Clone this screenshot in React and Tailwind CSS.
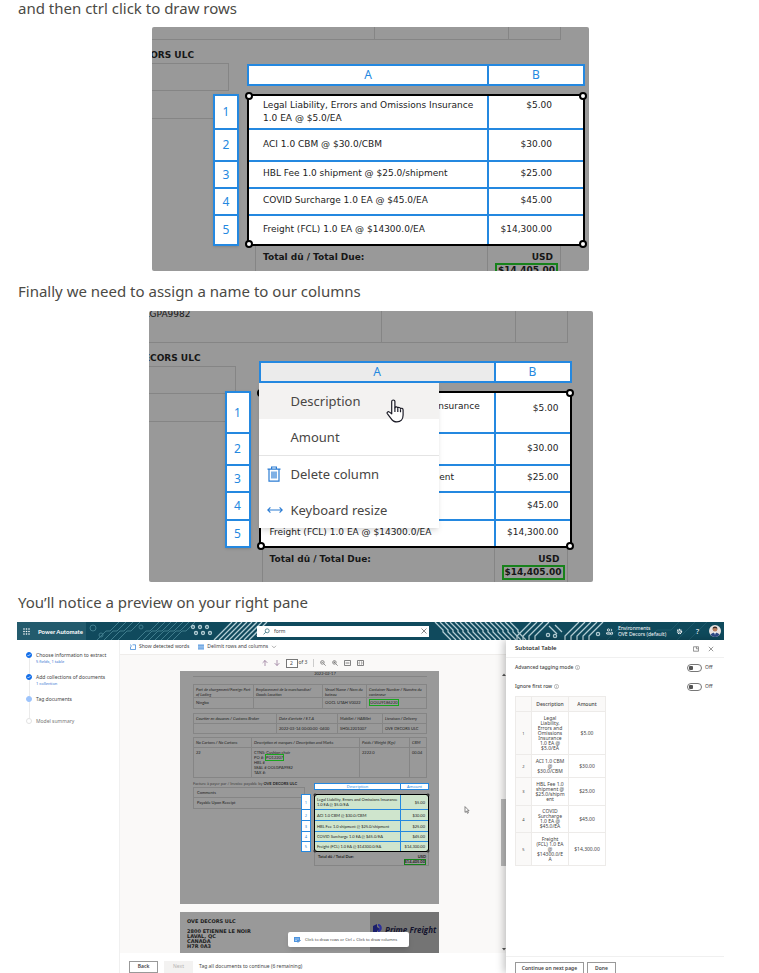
import React from "react";

const ui = "font-['Noto_Sans','Open_Sans',sans-serif]";
const doc = "font-['DejaVu_Sans',sans-serif]";
const fine = "font-['Lato','Open_Sans',sans-serif]";

const lineItems = [
  ["Legal Liability, Errors and Omissions Insurance 1.0 EA @ $5.0/EA", "$5.00"],
  ["ACI 1.0 CBM @ $30.0/CBM", "$30.00"],
  ["HBL Fee 1.0 shipment @ $25.0/shipment", "$25.00"],
  ["COVID Surcharge 1.0 EA @ $45.0/EA", "$45.00"],
  ["Freight (FCL) 1.0 EA @ $14300.0/EA", "$14,300.00"],
];

function Caption({ children, className = "leading-10" }) {
  return (
    <p className={`pl-px font-['Noto_Sans','Open_Sans',sans-serif] text-[15px] text-[#4b4a45] ${className}`}>
      {children}
    </p>
  );
}

function Handles({ size = "size-2 border-2" }) {
  const base = `absolute rounded-full border-black bg-white ${size}`;
  return (
    <>
      <span className={`${base} left-0 top-0 -translate-x-1/2 -translate-y-1/2`} />
      <span className={`${base} right-0 top-0 translate-x-1/2 -translate-y-1/2`} />
      <span className={`${base} bottom-0 left-0 -translate-x-1/2 translate-y-1/2`} />
      <span className={`${base} bottom-0 right-0 translate-x-1/2 translate-y-1/2`} />
    </>
  );
}

function Selection({ heights, colA, colB, padLeft, padRight, firstPad, active, children }) {
  return (
    <div className="grid w-fit grid-cols-[26px_auto] gap-2">
      <div />
      <div className={`relative flex h-[22px] border-2 border-[#2488e0] bg-white text-center text-[12px] leading-[18px] text-[#2488e0] ${ui}`}>
        <div className={`border-r-2 border-[#2488e0] ${colA} ${active ? "bg-[#ebebeb]" : ""}`}>A</div>
        <div className={colB}>B</div>
        {children}
      </div>
      <div className={`border-x-2 border-t-2 border-[#2488e0] bg-white text-[12px] text-[#2488e0] shadow-sm ${ui}`}>
        {heights.map((h, i) => (
          <div key={h + i} className={`flex items-center justify-center border-b-2 border-[#2488e0] ${h} ${i === 4 ? "box-content" : ""}`}>
            {i + 1}
          </div>
        ))}
      </div>
      <div className={`relative border-2 border-black bg-white ${doc}`}>
        <table className="table-fixed border-separate border-spacing-0 text-[9px] leading-[13px] text-[#222]">
          <tbody>
            {lineItems.map(([name, amount], i) => {
              const line = i < 4 ? "border-b-2" : "";
              const lift = i > 0 ? "pb-0.5" : "";
              return (
                <tr key={name} className={heights[i]}>
                  <td className={`border-r-2 border-[#2488e0] px-0 pt-0 ${line} ${lift} ${colA} ${padLeft}`}>{name}</td>
                  <td className={`border-[#2488e0] px-0 pt-0 text-right ${line} ${colB} ${padRight} ${i === 0 ? firstPad : lift}`}>{amount}</td>
                </tr>
              );
            })}
          </tbody>
        </table>
        <Handles />
      </div>
    </div>
  );
}

function Totals({ className, padLeft }) {
  return (
    <div className={`flex justify-between border-x border-[#858585] text-[9px] font-bold leading-3 text-[#161616] ${doc} ${className}`}>
      <span className={`pt-[5px] ${padLeft}`}>Total dû / Total Due:</span>
      <span className="flex flex-col items-end border-l border-[#858585] pl-[7px] pt-[5px]">
        <span className="pr-[7px]">USD</span>
        <span className="mr-0.5 border-2 border-[#17821b] px-px leading-[11px]">$14,405.00</span>
      </span>
    </div>
  );
}

function RowsFigure() {
  return (
    <figure className="relative mx-auto h-[244px] w-[437px] max-w-full overflow-hidden rounded-xs bg-[#999]">
      <div className={`absolute inset-0 text-[9px] font-bold text-[#161616] ${doc}`}>
        <div className="flex h-[13px] w-[409px] justify-end border-b border-r border-[#858585]">
          <div className="w-[134px] border-l border-[#858585]" />
          <div className="w-[52px] border-l border-[#858585]" />
        </div>
        <div className="flex h-[23px] w-[42px] items-center justify-end whitespace-nowrap pt-2">DECORS ULC</div>
        <div className="h-[28px] w-[77px] border-y border-r border-[#858585]" />
        <div className="h-[28px] w-[77px] border-b border-[#858585]" />
      </div>
      <div className="relative pl-[61px] pt-[37px]">
        <Selection
          heights={["h-[34px]", "h-[32px]", "h-[27px]", "h-[27px]", "h-[28px]"]}
          colA="w-[240px]"
          colB="w-[94px]"
          padLeft="pl-[14px]"
          padRight="pr-[31px]"
          firstPad="pb-[14px]"
        />
        <Totals className="ml-[42px] h-10 w-[306px]" padLeft="pl-[7px]" />
      </div>
    </figure>
  );
}

function TrashIcon() {
  return (
    <svg viewBox="0 0 14 16" className="h-4 w-3.5" fill="none" stroke="#2b7cd3" strokeWidth="1.2">
      <path d="M.5 3.200h13M4.600 3V1h4.800v2M2 3.200v12h10v-12" />
      <path d="M5 5.600v7M7 5.600v7M9 5.600v7" />
    </svg>
  );
}

function ResizeIcon() {
  return (
    <svg viewBox="0 0 16 8" className="h-2 w-4" fill="none" stroke="#2b7cd3" strokeWidth="1.1">
      <path d="M.8 4h14.400M3.400 1.400L.8 4l2.600 2.600M12.600 1.400L15.200 4l-2.600 2.600" />
    </svg>
  );
}

function HandCursor() {
  return (
    <svg viewBox="0 0 18 24" className="absolute left-[127px] top-4 h-6 w-[18px]" fill="#fff" stroke="#1b1b26" strokeWidth="1.2" strokeLinejoin="round">
      <path d="M5.700 14.800V2.600a1.600 1.600 0 0 1 3.200 0v6.200c.3-1.300 2.700-1.200 2.900.3.500-1 2.500-.8 2.700.6.600-.8 2.600-.5 2.600 1.200v5.200c0 4-2.400 6.800-6.200 6.800-3 0-4.500-1.300-6-3.600L1.300 14.600c-.8-1.400 1-2.600 2.200-1.500z" />
      <path d="M8.900 8.500v4.500M11.800 9.500V13M14.500 10.200v3" fill="none" />
    </svg>
  );
}

function ColumnMenu() {
  const item = "flex h-9 w-full items-center text-left";
  return (
    <div role="menu" className="absolute -left-0.5 top-5 z-10 w-[180px] bg-white text-[13px] text-[#484644] shadow-md">
      <button type="button" role="menuitem" className={`${item} bg-[#f3f2f1] pl-8`}>Description</button>
      <button type="button" role="menuitem" className={`${item} pl-8`}>Amount</button>
      <hr className="border-[#e4e4e4]" />
      <button type="button" role="menuitem" className={`${item} gap-2.5 pl-2`}><TrashIcon />Delete column</button>
      <button type="button" role="menuitem" className={`${item} gap-2 pl-2`}><ResizeIcon />Keyboard resize</button>
      <HandCursor />
    </div>
  );
}

function ColumnsFigure() {
  return (
    <figure className="relative mx-auto h-[271px] w-[444px] max-w-full overflow-hidden rounded-xs bg-[#999]">
      <div className={`absolute inset-0 text-[9px] text-[#161616] ${doc}`}>
        <div className="flex h-8 w-[419px] border-b border-r border-[#858585]">
          <div className="flex w-[42px] justify-end leading-[6px]">DLGPA9982</div>
          <div className="ml-auto w-[134px] border-l border-[#858585]" />
          <div className="w-[52px] border-l border-[#858585]" />
        </div>
        <div className="flex h-[23px] w-[52px] items-center justify-end whitespace-nowrap pt-2 font-bold">DECORS ULC</div>
        <div className="h-[28px] w-[87px] border-y border-r border-[#858585]" />
        <div className="h-[28px] w-[87px] border-b border-[#858585]" />
      </div>
      <div className="relative pl-[76px] pt-[50px]">
        <Selection
          heights={["h-[41px]", "h-[32px]", "h-[27px]", "h-[28px]", "h-[25px]"]}
          colA="w-[235px]"
          colB="w-[74px]"
          padLeft="pl-[9px]"
          padRight="pr-[11px]"
          firstPad="pb-2"
          active
        >
          <ColumnMenu />
        </Selection>
        <Totals className="ml-[37px] h-10 w-[306px]" padLeft="pl-[7px]" />
      </div>
    </figure>
  );
}

const dimTraces = [96, 103, 110, 117, 136, 142, 148, 154, 160, 166, 172];
const forwardTraces = [206, 211, 216, 221, 226, 231, 236, 241];
const backTraces = [418, 423, 428, 433, 438, 443, 448, 453, 458, 463, 468, 473, 478, 483, 488, 493];
const brightTraces = [500, 506, 512, 518, 548, 554, 560, 566, 572];

function Circuit() {
  return (
    <svg className="absolute inset-0 size-full" viewBox="0 0 707 18" preserveAspectRatio="xMinYMid slice" fill="none" aria-hidden="true">
      <g stroke="#3f7c8c" strokeWidth="1">
        {dimTraces.map((x) => (
          <path key={x} d={`M${x - 16} 18L${x - 7} 9L${x - 3} 9L${x + 6} 0`} />
        ))}
        <path d="M590 18l18-18M600 18l18-18M630 18l10-10h14l8-8M660 18l18-18M672 18l18-18" />
        <circle cx="76" cy="6" r="3" /><circle cx="84" cy="13" r="2" /><circle cx="124" cy="5" r="2" />
      </g>
      <g stroke="#b4ced5" strokeWidth="1.300">
        {forwardTraces.map((x) => (
          <path key={x} d={`M${x - 9} 18L${x + 9} 0`} />
        ))}
        {backTraces.map((x) => (
          <path key={x} d={`M${x} 0l8 8v2l8 8`} />
        ))}
        {brightTraces.map((x) => (
          <path key={x} d={`M${x} 18v-4l14-14`} />
        ))}
        {[176, 183, 190].map((x) => (
          <g key={x}><circle cx={x} cy="5" r="1.500" /><circle cx={x + 3} cy="11" r="1.500" /></g>
        ))}
        <path d="M532 4l8 8M538 3l7 7M240 14l4-8" />
        <circle cx="531" cy="13" r="1.600" /><circle cx="538" cy="14" r="1.600" /><circle cx="581" cy="12" r="1.600" />
      </g>
    </svg>
  );
}

function AppHeader() {
  return (
    <header className="relative flex h-[18px] items-center bg-[#104a5d] text-white">
      <Circuit />
      <div className="relative flex h-full w-[69px] items-center gap-2 bg-[#235b6d] pl-1.5">
        <svg viewBox="0 0 7 7" className="size-[7px] shrink-0" fill="#fff">
          {[1, 3.5, 6].map((x) => [1, 3.5, 6].map((y) => <circle key={`${x}-${y}`} cx={x} cy={y} r=".8" />))}
        </svg>
        <span className={`whitespace-nowrap text-[6px] font-bold ${fine}`}>Power Automate</span>
      </div>
      <label className="relative ml-[171px] flex h-[11px] w-[172px] items-center gap-1 bg-white px-1.5 text-[#444]">
        <svg viewBox="0 0 7 7" className="size-[7px]" fill="none" stroke="#35707e" strokeWidth=".8"><circle cx="4.200" cy="2.800" r="2" /><path d="M2.700 4.200L.6 6.400" /></svg>
        <input aria-label="Search" defaultValue="form" className="min-w-0 flex-1 bg-transparent text-[5px] leading-[8px] outline-none" />
        <svg viewBox="0 0 6 6" className="-mr-1 size-1.5" stroke="#555" strokeWidth=".7"><path d="M.5.500l5 5M5.500.500l-5 5" /></svg>
      </label>
      <div className="relative ml-auto flex h-full items-center bg-[#104a5d]/70 pr-[3px]">
        <svg viewBox="0 0 8 8" className="mr-[5px] size-[7px]" fill="none" stroke="#fff" strokeWidth=".9"><circle cx="2.800" cy="2.300" r="1.300" /><path d="M.5 7V5.500h4.600V7M5.500 1.200c1.500 0 1.500 2.200 0 2.200M6 5h1.500v2H1" /></svg>
        <div className="w-[58px] whitespace-nowrap text-[5px] leading-[6px]">Environments<br />OVE Decors (default)</div>
        <svg viewBox="0 0 8 8" className="size-[7px]" fill="none" stroke="#fff"><circle cx="4" cy="4" r="2.300" strokeWidth="1.500" strokeDasharray="1.200 .6" /><circle cx="4" cy="4" r="1" strokeWidth=".7" /></svg>
        <span className="ml-[13px] text-[7px] leading-none">?</span>
        <svg viewBox="0 0 12 12" className="ml-[10px] size-3"><circle cx="6" cy="6" r="6" fill="#e9e4e2" /><circle cx="6" cy="4.200" r="2.400" fill="#b97f60" /><path d="M3.600 3.800C3.500.7 8.500.7 8.400 3.800 7 2.600 5 2.600 3.600 3.800z" fill="#3c2a24" /><path d="M1.600 10.100C2.200 6.500 9.800 6.500 10.400 10.100 8 12.600 4 12.600 1.600 10.100z" fill="#2d4a86" /><path d="M5 7h2l-1 3z" fill="#fff" /></svg>
      </div>
    </header>
  );
}

const steps = [
  { label: "Choose information to extract", note: "5 fields, 1 table", state: "done" },
  { label: "Add collections of documents", note: "1 collection", state: "done" },
  { label: "Tag documents", state: "current" },
  { label: "Model summary", state: "todo" },
];
const dots = {
  done: "bg-[#1570ea] border-[#1570ea]",
  current: "bg-[#9cc3fb] border-[#9cc3fb]",
  todo: "bg-white border-[#e2e2e2]",
};

function Stepper() {
  return (
    <ol className="w-[103px] shrink-0 border-r border-[#f0f0f0] bg-white pl-[9px] pt-3 text-[5px] leading-[6px]">
      {steps.map((s, i) => (
        <li key={s.label} className="flex h-[22px] gap-1">
          <div className="flex flex-col items-center">
            <span className={`flex size-1.5 items-center justify-center rounded-full border ${dots[s.state]}`}>
              {s.state === "done" && <svg viewBox="0 0 4 4" className="size-1" fill="none" stroke="#fff" strokeWidth=".7"><path d="M.5 2l1 1 2-2" /></svg>}
            </span>
            {i < 3 && <span className="w-px flex-1 bg-[#ebebeb]" />}
          </div>
          <div className={`whitespace-nowrap ${s.state === "todo" ? "text-[#777]" : "text-[#444]"}`}>
            {s.label}
            {s.note && <div className="mt-px text-[4px] text-[#2f6fd0]">{s.note}</div>}
          </div>
        </li>
      ))}
    </ol>
  );
}

function Magnifier({ plus }) {
  return (
    <svg viewBox="0 0 6 6" className="size-1.5" fill="none" stroke="#666" strokeWidth=".7">
      <circle cx="2.400" cy="2.400" r="1.800" />
      <path d={plus ? "M3.700 3.700l2 2M1.500 2.400h1.800M2.400 1.500v1.800" : "M3.700 3.700l2 2M1.500 2.400h1.800"} />
    </svg>
  );
}

function Toolbar() {
  return (
    <>
      <div className="flex h-[15px] items-center border-b border-[#efedeb] bg-white pl-[10px] text-[5px] text-[#444]">
        <button type="button" className="flex items-center gap-[3px] whitespace-nowrap">
          <svg viewBox="0 0 6 6" className="size-1.5" fill="none" stroke="#2b7cd3" strokeWidth=".7"><path d="M2.500.800h3v4.700h-5v-3M.5.500l1 2" /></svg>
          Show detected words
        </button>
        <button type="button" className="ml-[9px] flex items-center gap-[3px] whitespace-nowrap">
          <svg viewBox="0 0 6 6" className="size-1.5"><path fill="#5b9be0" d="M0 .5h6v5H0z" /><path stroke="#fff" strokeWidth=".5" d="M0 2.200h6M0 3.900h6" /></svg>
          Delimit rows and columns
          <svg viewBox="0 0 6 4" className="h-1 w-1.5" fill="none" stroke="#777" strokeWidth=".6"><path d="M1 .8l2 2 2-2" /></svg>
        </button>
      </div>
      <div className="flex h-4 items-center justify-center gap-[6px] text-[5px] text-[#444]">
        <svg viewBox="0 0 6 6" className="size-1.5" fill="none" stroke="#8a6a8f" strokeWidth=".7"><path d="M3 6V.5M.6 2.900L3 .5l2.400 2.400" /></svg>
        <svg viewBox="0 0 6 6" className="size-1.5" fill="none" stroke="#8a6a8f" strokeWidth=".7"><path d="M3 0v5.500M.6 3.100L3 5.500l2.400-2.400" /></svg>
        <label className="flex items-center gap-px whitespace-nowrap">
          <input aria-label="Page" defaultValue="2" className="h-[9px] w-3 border border-[#777] bg-white text-center text-[5px]" /> of 3
        </label>
        <span className="h-2 w-px bg-[#ccc]" />
        <Magnifier plus={false} />
        <Magnifier plus />
        <svg viewBox="0 0 7 6" className="h-1.5 w-[7px]" fill="none" stroke="#666" strokeWidth=".8"><path d="M.5.500h6v5h-6zM1.600 3h3.800" /></svg>
        <svg viewBox="0 0 7 6" className="h-1.5 w-[7px]" fill="none" stroke="#666" strokeWidth=".8"><path d="M.5.500h6v5h-6zM2 2.500V2h.8M5 2.500V2h-.8M2 3.500V4h.8M5 3.500V4h-.8" /></svg>
      </div>
    </>
  );
}

const edge = "border-[#858585]";

function DocTable({ cols, head, body, headHeight, bodyHeight, className = "" }) {
  return (
    <div className={`border-l border-t ${edge} ${className}`}>
      <div className={`grid italic ${cols} ${headHeight}`}>
        {head.map((t) => <div key={t} className={`overflow-hidden border-b border-r pl-0.5 pt-0.5 ${edge}`}>{t}</div>)}
      </div>
      <div className={`grid ${cols} ${bodyHeight}`}>
        {body.map((t, i) => <div key={i} className={`whitespace-nowrap border-b border-r pl-0.5 pt-0.5 ${edge}`}>{t}</div>)}
      </div>
    </div>
  );
}

const miniHeights = ["h-[15px]", "h-[11px]", "h-[11px]", "h-[10px]", "h-[9px]"];

function MiniSelection() {
  return (
    <div className="absolute right-[10px] top-[112px] grid grid-cols-[10px_115px] gap-x-[3px] gap-y-1 text-[4px] leading-[5px]">
      <div />
      <div className={`flex h-[7px] border border-[#2488e0] bg-white text-center text-[#2488e0] ${ui}`}>
        <div className="w-[86px] border-r border-[#2488e0]">Description</div>
        <div className="flex-1">Amount</div>
      </div>
      <div className={`border-x border-t border-[#2488e0] bg-white text-[#2488e0] ${ui}`}>
        {miniHeights.map((h, i) => (
          <div key={i} className={`flex items-center justify-center border-b border-[#2488e0] ${h} ${i === 4 ? "box-content" : ""}`}>{i + 1}</div>
        ))}
      </div>
      <div className="relative border border-black bg-[#cfe5cd] text-[#222]">
        <table className="w-full table-fixed border-separate border-spacing-0">
          <tbody>
            {lineItems.map(([name, amount], i) => (
              <tr key={name} className={miniHeights[i]}>
                <td className={`w-[86px] border-r border-[#2488e0] p-0 pl-0.5 ${i < 4 ? "border-b" : ""}`}>{name}</td>
                <td className={`border-[#2488e0] p-0 pr-[3px] text-right ${i < 4 ? "border-b" : ""}`}>{amount}</td>
              </tr>
            ))}
          </tbody>
        </table>
        <Handles size="size-[3px] border" />
      </div>
      <div />
      <div className={`-mt-1 flex h-[14px] justify-between border-x border-b pl-[3px] pr-0.5 pt-0.5 font-bold text-[#222] ${edge}`}>
        <span>Total dû / Total Due:</span>
        <span className="flex flex-col items-end">USD<span className="border border-[#17821b] leading-1">$14,405.00</span></span>
      </div>
    </div>
  );
}

function Pages() {
  return (
    <div className={`relative flex min-h-0 flex-1 flex-col items-center gap-2 overflow-hidden pr-[7px] text-[4px] leading-[5px] text-[#222] ${fine}`}>
      <section className="relative h-[233px] w-[259px] shrink-0 bg-[#999] pl-[13px] pr-[12px]">
        <p className={`mb-[7px] border-b pl-[30px] text-center ${edge}`}>2022-02-17</p>
        <DocTable
          cols="grid-cols-[60px_69px_44px_1fr]" headHeight="h-[13px]" bodyHeight="h-[11px]"
          head={["Port de chargement/Foreign Port of Lading", "Emplacement de la marchandise/ Goods Location", "Vessel Name / Nom du bateau", "Container Number / Numéro du conteneur"]}
          body={["Ningbo", "", "OOCL UTAH V0022", <span className="border border-[#18a51d]">OOLU9186220</span>]}
        />
        <DocTable
          className="mt-1" cols="grid-cols-[83px_61px_45px_1fr]" headHeight="h-[10px]" bodyHeight="h-[10px]"
          head={["Courtier en douanes / Customs Broker", "Date d'arrivée / E.T.A", "Mabillet / HABillet", "Livraison / Delivery"]}
          body={["", "2022-03-14 00:00:00 -0400", "SHGL2201007", "OVE DECORS ULC"]}
        />
        <DocTable
          className="mt-[3px]" cols="grid-cols-[58px_108px_50px_1fr]" headHeight="h-[10px]" bodyHeight="h-[30px]"
          head={["No Cartons / No Cartons", "Description et marques / Description and Marks", "Poids / Weight (Kgs)", "CBM"]}
          body={["22", <span>CTNS: Cushion chair<br />PO #: <span className="border border-[#18a51d]">PO12207</span><br />HBL #<br />SEAL # OOLGPA9982<br />TAX #:</span>, "2222.0", "00.04"]}
        />
        <p className="mb-px mt-[3px] whitespace-nowrap text-[#444]">Facture à payer par / Invoice payable by <b className="text-[#222]">OVE DECORS ULC</b></p>
        <div className={`w-28 border ${edge}`}>
          <div className={`h-[10px] border-b pl-[3px] pt-0.5 ${edge}`}>Comments</div>
          <div className="h-[10px] pl-[3px] pt-0.5">Payable Upon Receipt</div>
        </div>
        <MiniSelection />
      </section>
      <section className="flex min-h-0 w-[259px] flex-1 justify-between overflow-hidden bg-[#999]">
        <address className={`whitespace-nowrap pl-[7px] pt-[7px] text-[5px] font-bold not-italic leading-[5px] text-[#1d1d1d] ${doc}`}>
          OVE DECORS ULC<br /><br />2800 ETIENNE LE NOIR<br />LAVAL, QC<br />CANADA<br />H7R 0A3
        </address>
        <div className="flex h-full w-[69px] items-start gap-0.5 bg-[#747474] pl-[3px] pt-3 font-['Open_Sans',sans-serif]">
          <svg viewBox="0 0 10 10" className="size-2.5 shrink-0"><path d="M0 2l4-2v3l3 2-3 2v3H0z" fill="#1b1f6b" /><path d="M5 0c5 0 5 8 0 8V6c2 0 2-4 0-4z" fill="#2c2f9c" /></svg>
          <span className="whitespace-nowrap text-[8px] font-bold italic leading-[11px] text-[#15152e]">Prime Freight</span>
        </div>
      </section>
      <div role="status" className={`absolute bottom-1.5 left-[168px] flex h-[15px] w-[121px] items-center gap-1 rounded-xs bg-white pl-1.5 text-[#444] shadow-md ${ui}`}>
        <svg viewBox="0 0 7 6" className="h-1.5 w-[7px] shrink-0"><path fill="#4d94df" d="M0 0h6v3L4 5H0z" /><path d="M1 2h4M1 3.500h2" stroke="#fff" strokeWidth=".5" /><path d="M4 5.500L6.500 3" stroke="#1e66b5" /></svg>
        <span className="whitespace-nowrap text-[4px]">Click to draw rows or Ctrl + Click to draw columns</span>
      </div>
      <div className="absolute inset-y-0 right-0 flex w-[5px] flex-col items-center justify-between py-0.5 text-[#555]">
        <svg viewBox="0 0 4 3" className="h-[3px] w-1"><path d="M0 3l2-2.500L4 3z" fill="currentColor" /></svg>
        <span className="mt-10 h-[67px] w-[5px] bg-[#b9b9b9]" />
        <svg viewBox="0 0 4 3" className="h-[3px] w-1"><path d="M0 0l2 2.500L4 0z" fill="currentColor" /></svg>
      </div>
      <svg viewBox="0 0 6 8" className="absolute right-9 top-[135px] h-2 w-1.5" fill="#fff" stroke="#555" strokeWidth=".7"><path d="M1 .6v5.800l1.400-1.200 1 2.100 1-.5-1-2h1.700z" /></svg>
    </div>
  );
}

const previewRows = [
  ["h-[43px]", "Legal\nLiability,\nErrors and\nOmissions\nInsurance\n1.0 EA @\n$5.0/EA"],
  ["h-[23px]", "ACI 1.0 CBM\n@\n$30.0/CBM"],
  ["h-[28px]", "HBL Fee 1.0\nshipment @\n$25.0/shipm\nent"],
  ["h-[27px]", "COVID\nSurcharge\n1.0 EA @\n$45.0/EA"],
  ["h-[33px]", "Freight\n(FCL) 1.0 EA\n@\n$14300.0/E\nA"],
];

function Toggle({ id, label }) {
  return (
    <div className="flex h-[19px] items-center">
      <label htmlFor={id} className="font-medium">{label}</label>
      <svg viewBox="0 0 5 5" className="ml-0.5 size-[5px]" fill="none" stroke="#777" strokeWidth=".5"><circle cx="2.500" cy="2.500" r="2.100" /><path d="M2.500 2.200v1.500M2.500 1.300v.4" /></svg>
      <input id={id} type="checkbox" role="switch" className="ml-auto h-2 w-[15px] appearance-none rounded-full border border-[#777] bg-[radial-gradient(circle_at_3px_50%,#555_2px,transparent_2.5px)]" />
      <span className="w-[22px] pl-[3px]">Off</span>
    </div>
  );
}

function PreviewPanel() {
  return (
    <aside className="z-10 flex w-[218px] shrink-0 flex-col bg-white text-[5px] leading-[5px] text-[#444] shadow-[-2px_0_8px_rgba(0,0,0,0.25)]">
      <div className="flex h-[18px] shrink-0 items-center gap-[9px] border-b border-[#f0f0f0] pl-[9px] pr-[10px]">
        <h2 className="mr-auto text-[6px] font-semibold text-[#333]">Subtotal Table</h2>
        <svg viewBox="0 0 6 6" className="size-1.5" fill="none" stroke="#666" strokeWidth=".7"><path d="M.4.800h5.200v4.400H.4zM3.400.800v2h2" /></svg>
        <svg viewBox="0 0 6 6" className="size-1.5" stroke="#555" strokeWidth=".6"><path d="M.8.800l4.400 4.400M5.200.800L.8 5.200" /></svg>
      </div>
      <div className="min-h-0 flex-1 overflow-hidden pl-[9px]">
        <Toggle id="tagging" label="Advanced tagging mode" />
        <Toggle id="first-row" label="Ignore first row" />
        <table className="w-[91px] table-fixed border-collapse text-center">
          <thead>
            <tr className="h-[15px] bg-[#faf9f8]">
              <th className="w-4 border border-[#edebe9]" />
              <th className="border border-[#edebe9] font-medium">Description</th>
              <th className="border border-[#edebe9] font-medium">Amount</th>
            </tr>
          </thead>
          <tbody>
            {previewRows.map(([h, name], i) => (
              <tr key={name} className={h}>
                <td className="border border-[#edebe9] bg-[#faf9f8] p-0 text-[4px]">{i + 1}</td>
                <td className="whitespace-pre border border-[#edebe9] p-0">{name}</td>
                <td className="border border-[#edebe9] p-0">{lineItems[i][1]}</td>
              </tr>
            ))}
          </tbody>
        </table>
      </div>
      <div className="flex h-[17px] shrink-0 items-start gap-[3px] overflow-hidden border-t border-[#f0f0f0] pl-[9px] pt-[5px]">
        <button type="button" className="h-3 w-[69px] border border-[#999] font-semibold">Continue on next page</button>
        <button type="button" className="h-3 w-[29px] border border-[#999] font-semibold">Done</button>
      </div>
    </aside>
  );
}

function PreviewFigure() {
  return (
    <figure className={`flex min-h-0 flex-1 flex-col overflow-hidden ${ui}`}>
      <AppHeader />
      <div className="flex min-h-0 flex-1">
        <Stepper />
        <div className="flex min-w-0 flex-1 flex-col bg-[#faf9f8]">
          <Toolbar />
          <Pages />
          <div className="flex h-5 shrink-0 items-center gap-[6px] bg-white pl-[9px] pt-2 text-[5px] text-[#444]">
            <button type="button" className="h-3 w-[29px] border border-[#999] font-semibold">Back</button>
            <button type="button" disabled className="h-3 w-[29px] bg-[#f3f2f1] text-[#b5b3b1]">Next</button>
            <span className="whitespace-nowrap">Tag all documents to continue (6 remaining)</span>
          </div>
        </div>
        <PreviewPanel />
      </div>
    </figure>
  );
}

export default function App() {
  return (
    <main className="flex h-screen flex-col overflow-hidden bg-white pl-[17px] pr-[35px]">
      <Caption className="pb-[11px] leading-4">and then ctrl click to draw rows</Caption>
      <RowsFigure />
      <Caption>Finally we need to assign a name to our columns</Caption>
      <ColumnsFigure />
      <Caption>You’ll notice a preview on your right pane</Caption>
      <PreviewFigure />
    </main>
  );
}
